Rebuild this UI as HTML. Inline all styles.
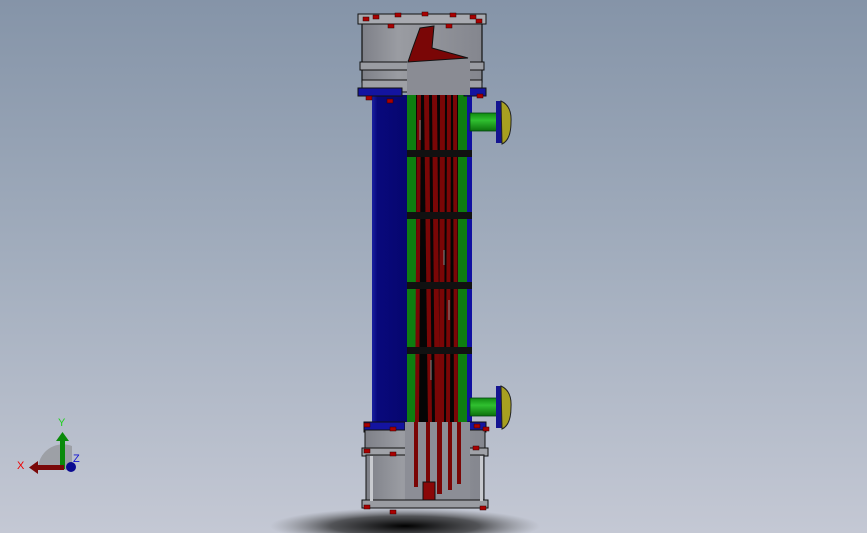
<!DOCTYPE html>
<html><head><meta charset="utf-8"><style>
html,body{margin:0;padding:0}
body{width:867px;height:533px;overflow:hidden;background:linear-gradient(#8594a8,#a3aebe 50%,#c4c8d4)}
svg{position:absolute;left:0;top:0}
</style></head><body>
<svg width="867" height="533" viewBox="0 0 867 533" xmlns="http://www.w3.org/2000/svg">
<defs>
<radialGradient id="sh" cx="0.5" cy="0.5" r="0.5"><stop offset="0" stop-color="#000" stop-opacity="1"/><stop offset="0.55" stop-color="#222" stop-opacity="0.7"/><stop offset="1" stop-color="#666" stop-opacity="0"/></radialGradient>
<linearGradient id="gr" x1="0" x2="1"><stop offset="0" stop-color="#7e8088"/><stop offset="0.3" stop-color="#9a9ca2"/><stop offset="1" stop-color="#84868e"/></linearGradient>
<linearGradient id="bl" x1="0" x2="1"><stop offset="0" stop-color="#1a20a0"/><stop offset="0.15" stop-color="#08087c"/><stop offset="1" stop-color="#06066e"/></linearGradient>
<linearGradient id="gp" x1="0" y1="0" x2="0" y2="1"><stop offset="0" stop-color="#108a10"/><stop offset="0.4" stop-color="#30c030"/><stop offset="1" stop-color="#0c700c"/></linearGradient>
</defs>
<ellipse cx="405" cy="526" rx="135" ry="18" fill="url(#sh)"/>
<rect x="372" y="95" width="36" height="330" fill="url(#bl)"/>
<rect x="407" y="95" width="62" height="330" fill="#050505"/>
<rect x="407" y="95" width="9" height="330" fill="#0e7e10"/>
<rect x="458" y="95" width="9" height="330" fill="#0e7e10"/>
<rect x="467" y="95" width="5" height="330" fill="#1010a0"/>
<g fill="#7a0606">
<polygon points="417,95 421,95 419,425 415,425"/>
<polygon points="424,95 429,95 432,425 428,425"/>
<polygon points="432,95 437,95 440,425 435,425"/>
<polygon points="440,95 445,95 444,425 439,425"/>
<polygon points="447,95 451,95 450,425 446,425"/>
<polygon points="453,95 457,95 458,425 454,425"/>
</g>
<g fill="#111"><rect x="407" y="150" width="65" height="7"/><rect x="407" y="212" width="65" height="7"/><rect x="407" y="282" width="65" height="7"/><rect x="407" y="347" width="65" height="7"/></g>
<g stroke="#888" stroke-width="1"><line x1="420" y1="120" x2="420" y2="140"/><line x1="444" y1="250" x2="444" y2="265"/><line x1="449" y1="300" x2="449" y2="320"/><line x1="431" y1="360" x2="431" y2="380"/></g>
<rect x="362" y="22" width="120" height="60" fill="url(#gr)" stroke="#111" stroke-width="1.2"/>
<rect x="358" y="14" width="128" height="10" fill="#a8aab0" stroke="#111"/>
<rect x="360" y="62" width="124" height="8" fill="#9a9ca2" stroke="#111"/>
<rect x="362" y="80" width="120" height="12" fill="#9ea0a6" stroke="#111"/>
<rect x="358" y="88" width="44" height="8" fill="#1414a0" stroke="#111"/>
<rect x="464" y="88" width="22" height="8" fill="#1414a0" stroke="#111"/>
<polygon points="407,60 470,60 470,95 407,95" fill="#8a8c94"/>
<polygon points="420,28 434,26 432,48 468,58 408,62 412,50" fill="#7a0606" stroke="#111"/>
<g fill="#a00" stroke="#300" stroke-width="0.5">
<rect x="363" y="17" width="6" height="4"/><rect x="373" y="15" width="6" height="4"/><rect x="395" y="13" width="6" height="4"/><rect x="422" y="12" width="6" height="4"/><rect x="450" y="13" width="6" height="4"/><rect x="470" y="15" width="6" height="4"/><rect x="476" y="19" width="6" height="4"/><rect x="388" y="24" width="6" height="4"/><rect x="446" y="24" width="6" height="4"/>
<rect x="366" y="96" width="6" height="4"/><rect x="387" y="99" width="6" height="4"/><rect x="477" y="94" width="6" height="4"/>
</g>
<g>
<rect x="470" y="113" width="28" height="18" fill="url(#gp)" stroke="#041" stroke-width="0.8"/>
<rect x="496" y="101" width="6" height="42" fill="#141490"/>
<path d="M501,101 Q512,106 511,122 Q511,140 502,144 Z" fill="#a8a020" stroke="#222"/>
<rect x="470" y="398" width="28" height="18" fill="url(#gp)" stroke="#041" stroke-width="0.8"/>
<rect x="496" y="386" width="6" height="42" fill="#141490"/>
<path d="M501,386 Q512,391 511,407 Q511,425 502,429 Z" fill="#a8a020" stroke="#222"/>
</g>
<rect x="364" y="422" width="41" height="10" fill="#1414a0" stroke="#111"/>
<rect x="468" y="422" width="18" height="10" fill="#1414a0" stroke="#111"/>
<rect x="365" y="430" width="120" height="20" fill="url(#gr)" stroke="#111"/>
<rect x="362" y="448" width="126" height="8" fill="#a0a2a8" stroke="#111"/>
<rect x="366" y="455" width="118" height="50" fill="url(#gr)" stroke="#111"/>
<rect x="405" y="422" width="65" height="80" fill="#8c8e96"/>
<g fill="#7a0606"><rect x="414" y="422" width="4" height="65"/><rect x="426" y="422" width="4" height="70"/><rect x="437" y="422" width="5" height="72"/><rect x="448" y="422" width="4" height="68"/><rect x="457" y="422" width="4" height="62"/></g>
<rect x="423" y="482" width="12" height="22" fill="#8a0808" stroke="#111"/>
<rect x="362" y="500" width="126" height="8" fill="#9a9ca2" stroke="#111"/>
<rect x="370" y="456" width="3" height="45" fill="#c8cacf"/><rect x="480" y="456" width="3" height="45" fill="#c8cacf"/>
<g fill="#a00" stroke="#300" stroke-width="0.5">
<rect x="364" y="423" width="6" height="4"/><rect x="390" y="427" width="6" height="4"/><rect x="474" y="424" width="6" height="4"/><rect x="483" y="427" width="6" height="4"/>
<rect x="364" y="449" width="6" height="4"/><rect x="390" y="452" width="6" height="4"/><rect x="473" y="446" width="6" height="4"/>
<rect x="364" y="505" width="6" height="4"/><rect x="390" y="510" width="6" height="4"/><rect x="480" y="506" width="6" height="4"/>
</g>
<path d="M38,470 A25,25 0 0 1 72,446 L72,470 Z" fill="#9a9ca2" opacity="0.9"/>
<rect x="60" y="440" width="5" height="29" fill="#0a8a0a"/>
<polygon points="56,441 62.5,432 69,441" fill="#0a8a0a"/>
<rect x="36" y="465" width="28" height="5" fill="#7a0808"/>
<polygon points="38,461 29,467.5 38,474" fill="#7a0808"/>
<circle cx="71" cy="467" r="5" fill="#0a0a90"/>
<text x="58" y="426" font-family="Liberation Sans, sans-serif" font-size="11" fill="#1fd01f">Y</text>
<text x="17" y="469" font-family="Liberation Sans, sans-serif" font-size="11" fill="#e00">X</text>
<text x="73" y="462" font-family="Liberation Sans, sans-serif" font-size="11" fill="#1010d0">Z</text>
</svg>
</body></html>
